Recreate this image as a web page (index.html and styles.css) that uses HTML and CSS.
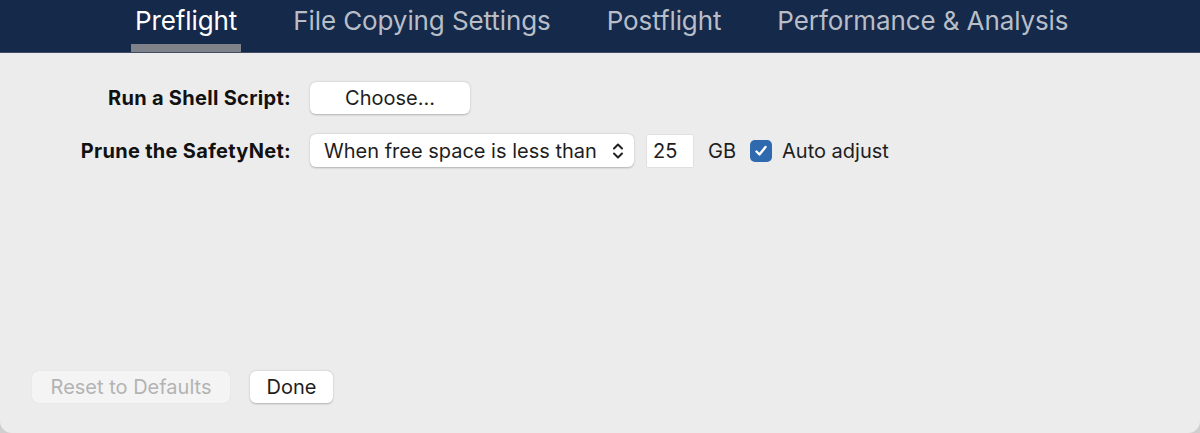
FILE: index.html
```html
<!DOCTYPE html>
<html lang="en">
<head>
    <meta charset="UTF-8">
    <meta name="viewport" content="width=device-width, initial-scale=1.0">
    <title>Preflight</title>
    <link rel="stylesheet" href="styles.css">
</head>
<body>
    <div class="window">
        <nav class="tabs">
            <div class="tab active">Preflight</div>
            <div class="tab">File Copying Settings</div>
            <div class="tab">Postflight</div>
            <div class="tab">Performance &amp; Analysis</div>
        </nav>

        <div class="settings">
            <label class="row-label">Run a Shell Script:</label>
            <div class="row-controls">
                <button class="btn choose">Choose...</button>
            </div>

            <label class="row-label">Prune the SafetyNet:</label>
            <div class="row-controls">
                <div class="select">
                    <span>When free space is less than</span>
                    <svg class="chevron" width="14" height="22" viewBox="0 0 14 22">
                        <path d="M3 8.5 L7 4.5 L11 8.5 M3 13.5 L7 17.5 L11 13.5" fill="none" stroke="#222" stroke-width="2" stroke-linecap="round" stroke-linejoin="round"/>
                    </svg>
                </div>
                <div class="num">25</div>
                <span class="unit">GB</span>
                <span class="check">
                    <svg width="14" height="14" viewBox="0 0 14 14">
                        <path d="M2.5 7.5 L5.5 10.5 L11.5 3" fill="none" stroke="#fff" stroke-width="2.4" stroke-linecap="round" stroke-linejoin="round"/>
                    </svg>
                </span>
                <span class="check-label">Auto adjust</span>
            </div>
        </div>

        <div class="footer">
            <button class="btn reset" disabled>Reset to Defaults</button>
            <button class="btn done">Done</button>
        </div>
    </div>
</body>
</html>
```

FILE: styles.css
```css
* {
    box-sizing: border-box;
}

body {
    margin: 0;
    background: #cfcfcf;
    font-family: 'Inter', 'Liberation Sans', sans-serif;
    color: #1e1e1e;
}

.window {
    height: 433px;
    background: #ececec;
    border-radius: 0 0 12px 12px;
    display: flex;
    flex-direction: column;
    overflow: hidden;
}

.tabs {
    height: 53px;
    background: #15294a;
    border-bottom: 1px solid #3f4c63;
    display: flex;
    padding-left: 131px;
    gap: 48px;
}

.tab {
    font-size: 26px;
    color: #b8bec8;
    padding: 5px 4px 0;
    border-bottom: 8px solid transparent;
    letter-spacing: -0.1px;
}

.tab.active {
    color: #fff;
    border-bottom-color: #7f8289;
}

.settings {
    display: grid;
    grid-template-columns: 291px 1fr;
    column-gap: 19px;
    row-gap: 20px;
    padding-top: 28px;
    align-items: center;
}

.row-label {
    text-align: right;
    font-size: 20px;
    font-weight: 700;
    letter-spacing: 0.3px;
    color: #111;
}

.row-controls {
    display: flex;
    align-items: center;
    height: 33px;
}

.btn {
    font-family: inherit;
    font-size: 20px;
    height: 32px;
    border: none;
    border-radius: 6px;
    background: #fff;
    color: #1e1e1e;
    box-shadow: 0 0.5px 2px rgba(0, 0, 0, 0.25);
    padding: 0 12px;
}

.choose {
    width: 160px;
}

.select {
    width: 324px;
    height: 33px;
    background: #fff;
    border-radius: 6px;
    box-shadow: 0 0.5px 2px rgba(0, 0, 0, 0.25);
    display: flex;
    align-items: center;
    justify-content: space-between;
    padding: 0 9px 0 14px;
    font-size: 20px;
}

.num {
    width: 46px;
    height: 32px;
    margin-left: 13px;
    background: #fff;
    box-shadow: 0 0 1px rgba(0, 0, 0, 0.3);
    font-size: 20px;
    display: flex;
    align-items: center;
    padding-left: 6px;
}

.unit {
    margin-left: 15px;
    font-size: 20px;
}

.check {
    width: 22px;
    height: 22px;
    margin-left: 14px;
    border-radius: 5px;
    background: #2f69ae;
    display: flex;
    align-items: center;
    justify-content: center;
}

.check-label {
    margin-left: 10px;
    font-size: 20px;
}

.footer {
    margin-top: auto;
    padding: 0 0 30px 32px;
    display: flex;
    gap: 20px;
}

.reset {
    width: 198px;
    background: #f4f4f4;
    color: #b3b3b3;
    box-shadow: 0 0 1px rgba(0, 0, 0, 0.15);
}

.done {
    width: 83px;
}
```
